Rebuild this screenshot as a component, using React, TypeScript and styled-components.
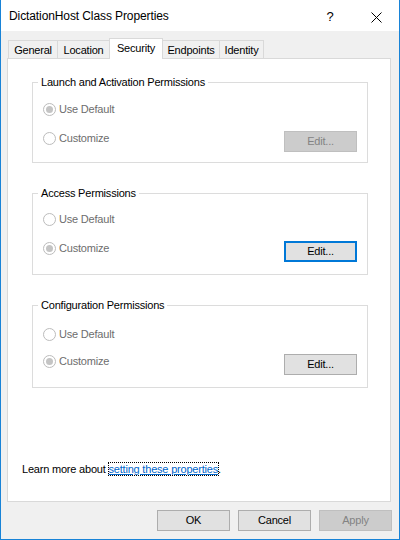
import React from "react";
import styled, { createGlobalStyle } from "styled-components";

const Global = createGlobalStyle`
  html, body { margin: 0; padding: 0; width: 400px; height: 540px; overflow: hidden; background: #ffffff; }
  * { box-sizing: border-box; }
  #root { width: 400px; height: 540px; }
`;

const FONT = `"Segoe UI", "Liberation Sans", Arial, sans-serif`;

const Window = styled.div`
  width: 400px;
  height: 540px;
  display: flex;
  flex-direction: column;
  border-left: 1px solid #1883d7;
  border-right: 1px solid #1883d7;
  border-bottom: 1px solid #1883d7;
  font-family: ${FONT};
  font-size: 11px;
  letter-spacing: -0.2px;
  color: #000000;
  background: #f0f0f0;
`;

const TitleBar = styled.div`
  height: 31px;
  flex: none;
  display: flex;
  align-items: center;
  background: #ffffff;
  letter-spacing: -0.1px;
`;

const Title = styled.div`
  flex: 1;
  padding-left: 8px;
  font-size: 12px;
  line-height: 16px;
  padding-top: 1px;
`;

const CaptionButton = styled.div`
  width: 46px;
  height: 31px;
  display: flex;
  align-items: center;
  justify-content: center;
  font-size: 13px;
  padding-top: 1px;
`;

const Body = styled.div`
  flex: 1;
  display: flex;
  flex-direction: column;
  padding: 7px 8px 8px 6px;
`;

const TabRow = styled.div`
  height: 20px;
  display: flex;
  align-items: flex-end;
  padding-left: 1px;
  position: relative;
  z-index: 2;
`;

const Tab = styled.div<{ $w: number; $active?: boolean }>`
  width: ${(p) => p.$w}px;
  height: ${(p) => (p.$active ? 21 : 18)}px;
  margin-left: -1px;
  margin-bottom: ${(p) => (p.$active ? -1 : 0)}px;
  &:first-child { margin-left: 0; }
  border: 1px solid #d9d9d9;
  border-bottom: none;
  background: ${(p) => (p.$active ? "#ffffff" : "#f0f0f0")};
  position: relative;
  z-index: ${(p) => (p.$active ? 3 : 1)};
  display: flex;
  justify-content: center;
  padding-top: 2px;
  line-height: 15px;
`;

const Panel = styled.div`
  height: 444px;
  flex: none;
  background: #ffffff;
  border: 1px solid #d9d9d9;
  display: flex;
  flex-direction: column;
  padding: 23px 22px 24px 24px;
  position: relative;
  z-index: 1;
`;

const Groups = styled.div`
  display: flex;
  flex-direction: column;
  gap: 30px;
`;

const Group = styled.div<{ $h: number; $top: number; $gap: number }>`
  position: relative;
  height: ${(p) => p.$h}px;
  border: 1px solid #dcdcdc;
  padding: ${(p) => p.$top}px 10px 0 10px;
  display: flex;
  flex-direction: column;
  gap: ${(p) => p.$gap}px;
`;

const GroupTitle = styled.span`
  position: absolute;
  top: -8px;
  left: 5px;
  padding: 0 3px;
  background: #ffffff;
  line-height: 15px;
  white-space: nowrap;
`;

const OptionRow = styled.div`
  display: flex;
  align-items: flex-start;
  justify-content: space-between;
`;

const RadioLabel = styled.label`
  display: flex;
  align-items: center;
  gap: 3px;
  height: 14px;
  color: #6d6d6d;
  line-height: 14px;
`;

const RadioCircle = styled.span<{ $checked?: boolean }>`
  width: 13px;
  height: 13px;
  border-radius: 50%;
  border: 1px solid #bcbcbc;
  background: #ffffff;
  display: flex;
  align-items: center;
  justify-content: center;
  &::after {
    content: "";
    width: 7px;
    height: 7px;
    border-radius: 50%;
    background: ${(p) => (p.$checked ? "#c4c4c4" : "transparent")};
  }
`;

const Button = styled.button<{ $focused?: boolean }>`
  width: 73px;
  height: 21px;
  padding: 0;
  font-family: ${FONT};
  font-size: 11px;
  letter-spacing: -0.2px;
  line-height: 15px;
  color: #000000;
  background: #e1e1e1;
  border: ${(p) => (p.$focused ? "2px solid #0078d7" : "1px solid #adadad")};
  &:disabled {
    background: #cccccc;
    border: 1px solid #bfbfbf;
    color: #838383;
  }
`;

const LearnMore = styled.div`
  margin-top: auto;
  margin-left: -10px;
  line-height: 16px;
`;

const Link = styled.a`
  color: #0066cc;
  text-decoration: underline;
  outline: 1px dotted #000000;
  outline-offset: 0px;
`;

const Footer = styled.div`
  display: flex;
  justify-content: flex-end;
  gap: 8px;
  margin-top: 8px;
  margin-right: -1px;
`;

const tabs = [
  { label: "General", w: 50 },
  { label: "Location", w: 53 },
  { label: "Security", w: 54, active: true },
  { label: "Endpoints", w: 58 },
  { label: "Identity", w: 45 },
];

const groups = [
  { title: "Launch and Activation Permissions", custom: false, editFocused: false, h: 81, top: 19, gap: 15 },
  { title: "Access Permissions", custom: true, editFocused: true, h: 82, top: 18, gap: 15 },
  { title: "Configuration Permissions", custom: true, editFocused: false, h: 83, top: 21, gap: 13 },
];

function Radio({ checked, children }: { checked: boolean; children: React.ReactNode }) {
  return (
    <RadioLabel>
      <RadioCircle $checked={checked} />
      {children}
    </RadioLabel>
  );
}

export default function App() {
  return (
    <>
      <Global />
      <Window>
        <TitleBar>
          <Title>DictationHost Class Properties</Title>
          <CaptionButton>?</CaptionButton>
          <CaptionButton>
            <svg width="11" height="11" viewBox="0 0 11 11" style={{ marginTop: 2 }}>
              <path d="M0.5 0.5 L10.5 10.5 M10.5 0.5 L0.5 10.5" stroke="#000" strokeWidth="1" fill="none" />
            </svg>
          </CaptionButton>
        </TitleBar>
        <Body>
          <TabRow>
            {tabs.map((t) => (
              <Tab key={t.label} $w={t.w} $active={t.active}>
                {t.label}
              </Tab>
            ))}
          </TabRow>
          <Panel>
            <Groups>
              {groups.map((g) => (
                <Group key={g.title} $h={g.h} $top={g.top} $gap={g.gap}>
                  <GroupTitle>{g.title}</GroupTitle>
                  <OptionRow>
                    <Radio checked={!g.custom}>Use Default</Radio>
                  </OptionRow>
                  <OptionRow>
                    <Radio checked={g.custom}>Customize</Radio>
                    <Button disabled={!g.custom} $focused={g.editFocused}>
                      Edit...
                    </Button>
                  </OptionRow>
                </Group>
              ))}
            </Groups>
            <LearnMore>
              Learn more about <Link>setting these properties</Link>.
            </LearnMore>
          </Panel>
          <Footer>
            <Button>OK</Button>
            <Button>Cancel</Button>
            <Button disabled>Apply</Button>
          </Footer>
        </Body>
      </Window>
    </>
  );
}
